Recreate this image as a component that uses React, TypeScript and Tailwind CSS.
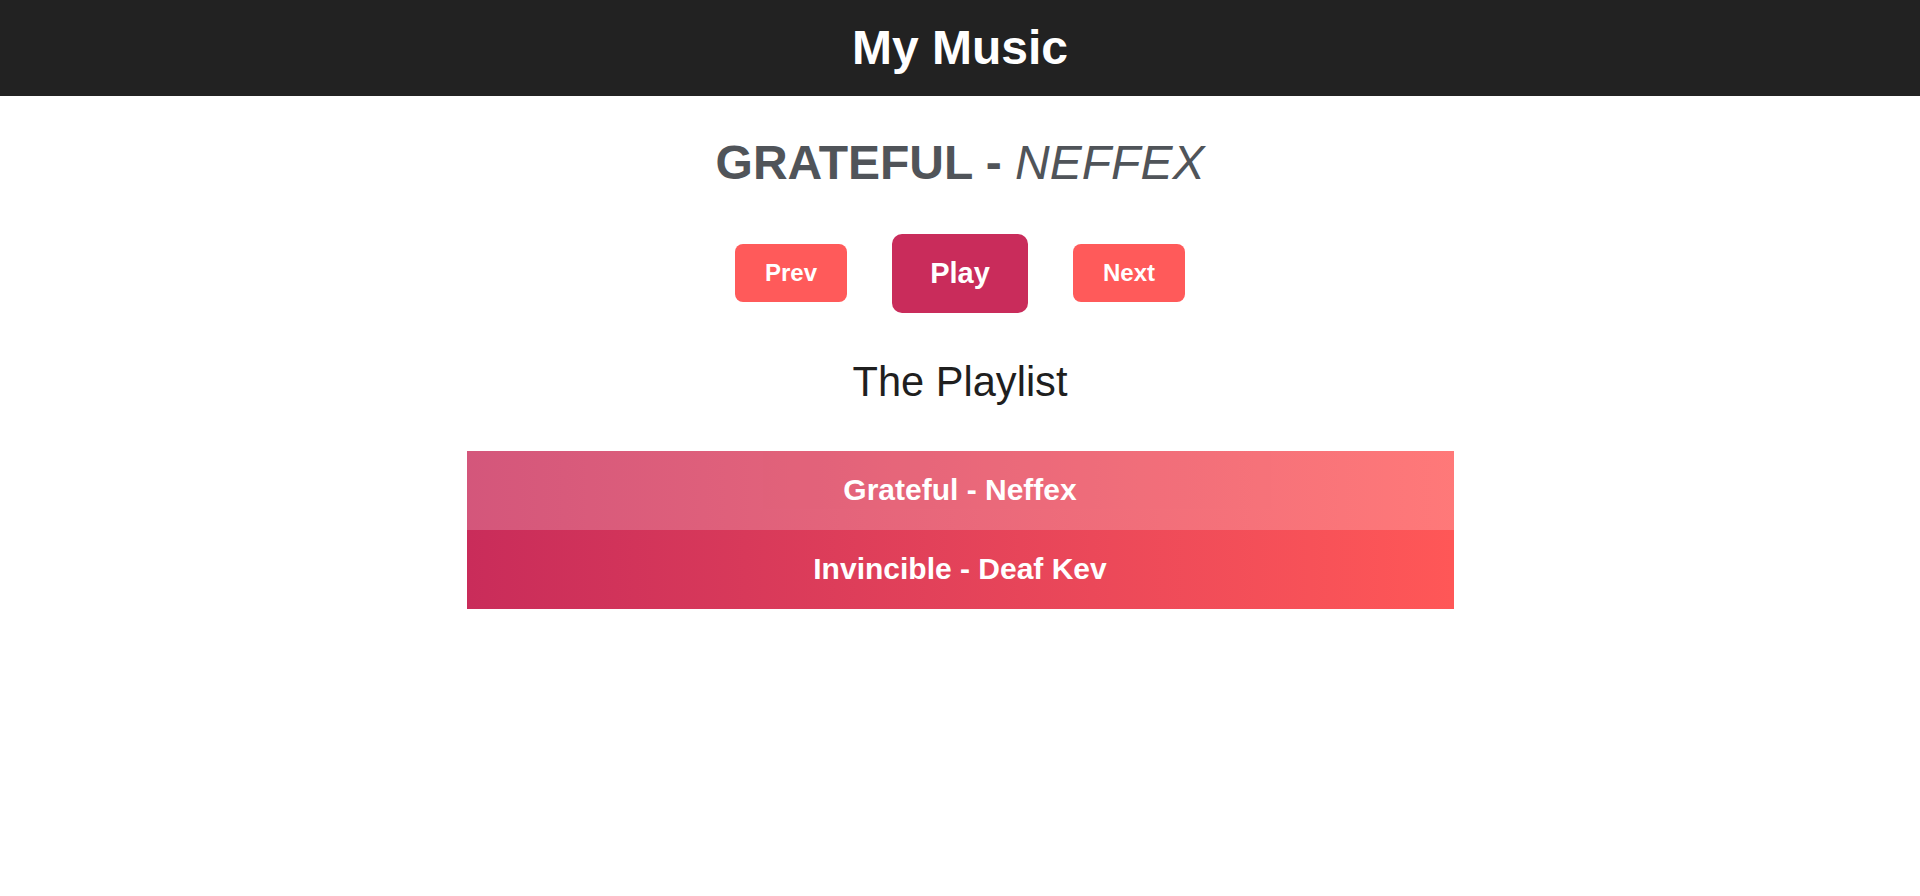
import React from "react";

const songs = ["Grateful - Neffex", "Invincible - Deaf Kev"];

export default function App() {
  return (
    <div
      className="min-h-[896px] bg-white"
      style={{ fontFamily: '"Liberation Sans", Arial, sans-serif' }}
    >
      <header className="h-[96px] pb-[2px] bg-[#222222] flex items-center justify-center">
        <h1 className="text-[48px] leading-[55px] font-bold text-white">My Music</h1>
      </header>
      <main className="flex flex-col items-center">
        <h2 className="mt-[39px] text-[48px] leading-[55px] text-[#505459]">
          <span className="font-bold">GRATEFUL - </span>
          <span className="italic font-normal">NEFFEX</span>
        </h2>
        <div className="mt-[44px] flex items-start gap-[45px]">
          <button className="mt-[10px] w-[112px] h-[58px] rounded-[8px] bg-[#ff5a5a] text-white font-bold text-[24px] leading-[28px]">
            Prev
          </button>
          <button className="w-[136px] h-[79px] rounded-[10px] bg-[#c92c5b] text-white font-bold text-[29px] leading-[33px]">
            Play
          </button>
          <button className="mt-[10px] w-[112px] h-[58px] rounded-[8px] bg-[#ff5a5a] text-white font-bold text-[24px] leading-[28px]">
            Next
          </button>
        </div>
        <h3 className="mt-[45px] text-[41.6px] leading-[48px] text-[#1f1f1f]">The Playlist</h3>
        <ul className="mt-[45px] w-[987px] flex flex-col">
          {songs.map((s, i) => (
            <li
              key={s}
              className={
                "h-[79px] pb-[2px] flex items-center justify-center text-white font-bold text-[30px] bg-gradient-to-r from-[#c92c5a] to-[#ff5757] " +
                (i === 0 ? "opacity-80" : "")
              }
            >
              {s}
            </li>
          ))}
        </ul>
      </main>
    </div>
  );
}
